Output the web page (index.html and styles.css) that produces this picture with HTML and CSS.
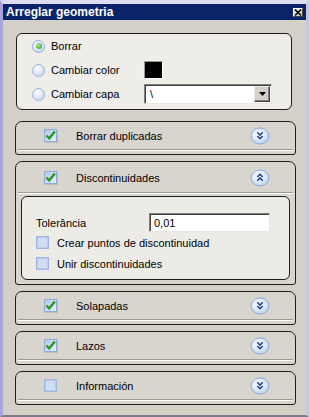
FILE: index.html
```html
<!DOCTYPE html>
<html>
<head>
<meta charset="utf-8">
<link rel="stylesheet" href="styles.css">
</head>
<body>
<div class="window">
  <div class="titlebar">
    <span class="title">Arreglar geometria</span>
    <span class="close"><svg width="8" height="7" viewBox="0 0 8 7"><path d="M1 0.5 L7 6.5 M7 0.5 L1 6.5" stroke="#000" stroke-width="1.4"/></svg></span>
  </div>
  <div class="content">
    <div class="group">
      <div class="row"><span class="radio on"></span><span class="lbl">Borrar</span></div>
      <div class="row"><span class="radio"></span><span class="lbl">Cambiar color</span><span class="swatch"></span></div>
      <div class="row"><span class="radio"></span><span class="lbl">Cambiar capa</span>
        <div class="select"><span class="sel-text">\</span><span class="arrow"><svg width="7" height="4" viewBox="0 0 7 4"><path d="M0 0 H7 L3.5 4 Z" fill="#000"/></svg></span></div>
      </div>
    </div>

    <div class="panel">
      <div class="ph">
        <span class="cb checked"><svg width="11" height="11" viewBox="0 0 11 11"><path d="M1.5 5.5 L4.2 8.5 L9.8 1.5" fill="none" stroke="#1f9c1f" stroke-width="2.4"/></svg></span>
        <span class="ptitle">Borrar duplicadas</span>
        <svg class="chev" width="20" height="18" viewBox="0 0 20 18"><defs><radialGradient id="g1" cx="0.45" cy="0.4" r="0.6"><stop offset="0" stop-color="#ffffff"/><stop offset="0.55" stop-color="#e2ebfb"/><stop offset="1" stop-color="#b7cbef"/></radialGradient></defs><ellipse cx="10" cy="9" rx="9" ry="8" fill="url(#g1)" stroke="#8faadc"/><path d="M7.3 5.3 L10 8 L12.7 5.3 M7.3 9 L10 11.7 L12.7 9" fill="none" stroke="#1f3d8c" stroke-width="1.6"/></svg>
      </div>
      <div class="sep"></div>
      <div class="pb"></div>
    </div>

    <div class="panel open">
      <div class="ph tall">
        <span class="cb checked"><svg width="11" height="11" viewBox="0 0 11 11"><path d="M1.5 5.5 L4.2 8.5 L9.8 1.5" fill="none" stroke="#1f9c1f" stroke-width="2.4"/></svg></span>
        <span class="ptitle">Discontinuidades</span>
        <svg class="chev" width="20" height="18" viewBox="0 0 20 18"><ellipse cx="10" cy="9" rx="9" ry="8" fill="url(#g1)" stroke="#8faadc"/><path d="M7.3 8 L10 5.3 L12.7 8 M7.3 11.7 L10 9 L12.7 11.7" fill="none" stroke="#1f3d8c" stroke-width="1.6"/></svg>
      </div>
      <div class="sep"></div>
      <div class="inner">
        <div class="irow"><span class="ilbl">Tolerância</span><div class="input">0,01</div></div>
        <div class="crow"><span class="cb plain"></span><span>Crear puntos de discontinuidad</span></div>
        <div class="crow"><span class="cb plain"></span><span>Unir discontinuidades</span></div>
      </div>
    </div>

    <div class="panel">
      <div class="ph">
        <span class="cb checked"><svg width="11" height="11" viewBox="0 0 11 11"><path d="M1.5 5.5 L4.2 8.5 L9.8 1.5" fill="none" stroke="#1f9c1f" stroke-width="2.4"/></svg></span>
        <span class="ptitle">Solapadas</span>
        <svg class="chev" width="20" height="18" viewBox="0 0 20 18"><ellipse cx="10" cy="9" rx="9" ry="8" fill="url(#g1)" stroke="#8faadc"/><path d="M7.3 5.3 L10 8 L12.7 5.3 M7.3 9 L10 11.7 L12.7 9" fill="none" stroke="#1f3d8c" stroke-width="1.6"/></svg>
      </div>
      <div class="sep"></div>
      <div class="pb"></div>
    </div>

    <div class="panel">
      <div class="ph">
        <span class="cb checked"><svg width="11" height="11" viewBox="0 0 11 11"><path d="M1.5 5.5 L4.2 8.5 L9.8 1.5" fill="none" stroke="#1f9c1f" stroke-width="2.4"/></svg></span>
        <span class="ptitle">Lazos</span>
        <svg class="chev" width="20" height="18" viewBox="0 0 20 18"><ellipse cx="10" cy="9" rx="9" ry="8" fill="url(#g1)" stroke="#8faadc"/><path d="M7.3 5.3 L10 8 L12.7 5.3 M7.3 9 L10 11.7 L12.7 9" fill="none" stroke="#1f3d8c" stroke-width="1.6"/></svg>
      </div>
      <div class="sep"></div>
      <div class="pb"></div>
    </div>

    <div class="panel">
      <div class="ph">
        <span class="cb plain"></span>
        <span class="ptitle">Información</span>
        <svg class="chev" width="20" height="18" viewBox="0 0 20 18"><ellipse cx="10" cy="9" rx="9" ry="8" fill="url(#g1)" stroke="#8faadc"/><path d="M7.3 5.3 L10 8 L12.7 5.3 M7.3 9 L10 11.7 L12.7 9" fill="none" stroke="#1f3d8c" stroke-width="1.6"/></svg>
      </div>
      <div class="sep"></div>
      <div class="pb"></div>
    </div>
  </div>
</div>
</body>
</html>
```
FILE: styles.css
```css
* { box-sizing: border-box; }
html, body { margin: 0; padding: 0; }
body {
  font-family: "Liberation Sans", Arial, sans-serif;
  font-size: 11px;
  color: #000;
  background: #d4d0c8;
}
.window {
  width: 309px;
  height: 417px;
  background: #d4d0c8;
  border-top: 4px solid #dedcf0;
  border-left: 3px solid #a8a4dc;
  border-right: 3px solid #c9c7dc;
  border-bottom: 2px solid #7c7a86;
  display: flex;
  flex-direction: column;
}
.titlebar {
  height: 16px;
  background: #0a246a;
  display: flex;
  align-items: center;
  padding: 0 3px 0 3px;
}
.title {
  color: #fff;
  font-weight: bold;
  font-size: 12px;
  flex: 1;
  line-height: 16px;
}
.close {
  width: 10px;
  height: 9px;
  background: #d4d0c8;
  border-top: 1px solid #fff;
  border-left: 1px solid #fff;
  border-right: 1px solid #404040;
  border-bottom: 1px solid #404040;
  display: flex;
  align-items: center;
  justify-content: center;
  margin-top: 1px;
}
.close svg { display: block; }
.content {
  padding: 13px 0 0 12px;
  display: flex;
  flex-direction: column;
  gap: 6px;
}
.group {
  margin-left: 1px;
  width: 276px;
  height: 77px;
  border: 1px solid #1e1e1e;
  border-radius: 6px;
  background: #eeede8;
  padding: 0 0 0 15px;
  margin-bottom: 5px;
}
.row {
  height: 24px;
  display: flex;
  align-items: center;
}
.radio {
  width: 13px;
  height: 13px;
  border-radius: 50%;
  border: 1px solid #98b0dc;
  background: radial-gradient(circle at 40% 35%, #ffffff 0%, #e0eafa 45%, #b3c8ee 100%);
  position: relative;
  flex: none;
}
.radio.on::after {
  content: "";
  position: absolute;
  left: 2.5px;
  top: 2.5px;
  width: 6px;
  height: 6px;
  border-radius: 50%;
  background: radial-gradient(circle at 40% 35%, #b4e79b 0%, #62b545 60%, #3f8f2c 100%);
}
.lbl {
  margin-left: 6px;
  width: 93px;
  flex: none;
}
.swatch {
  width: 19px;
  height: 18px;
  background: #000;
  border: 1px solid #fff;
  border-top-color: #9a9890;
  border-left-color: #9a9890;
  outline: 1px solid #f2f1ee;
}
.select {
  width: 128px;
  height: 20px;
  background: #fff;
  border-top: 1px solid #808080;
  border-left: 1px solid #808080;
  border-right: 1px solid #e8e6e0;
  border-bottom: 1px solid #e8e6e0;
  box-shadow: inset 1px 1px 0 #404040;
  display: flex;
  align-items: center;
}
.sel-text { flex: 1; padding-left: 5px; }
.arrow {
  width: 16px;
  height: 16px;
  margin-right: 1px;
  background: #d4d0c8;
  border-top: 1px solid #f0efeb;
  border-left: 1px solid #f0efeb;
  border-right: 1px solid #404040;
  border-bottom: 1px solid #404040;
  box-shadow: inset -1px -1px 0 #808080;
  display: flex;
  align-items: center;
  justify-content: center;
}
.arrow svg { display: block; }
.panel {
  width: 281px;
  border: 1px solid #1e1e1e;
  border-radius: 7px 7px 3px 3px;
  background: #d8d5ce;
}
.ph {
  height: 27px;
  display: flex;
  align-items: center;
  padding: 0 25px 0 28px;
}
.ph.tall { height: 30px; padding-top: 1px; }
.ptitle { margin-left: 19px; flex: 1; }
.chev { display: block; flex: none; }
.sep {
  margin: 0 2px;
  height: 2px;
  border-top: 1px solid #9c9a94;
  border-bottom: 1px solid #ffffff;
}
.pb { height: 3px; }
.cb {
  width: 13px;
  height: 13px;
  flex: none;
  display: flex;
  align-items: center;
  justify-content: center;
  border: 1px solid #92aad8;
  background: linear-gradient(135deg, #b3c7ea 0%, #d2def3 60%, #e6edf9 100%);
  box-shadow: 1px 1px 0 rgba(120,130,150,0.3);
}
.cb svg { display: block; }
.cb.plain {
  background: #cfdcf2;
  border: 1px solid #9fb5e0;
  box-shadow: inset 0 0 0 1px #b8cbec;
}
.inner {
  margin: 2px 5px 4px 5px;
  height: 84px;
  border: 1px solid #1e1e1e;
  border-radius: 6px;
  background: #ecebe6;
  padding: 15px 0 0 14px;
}
.irow {
  height: 20px;
  display: flex;
  align-items: center;
}
.ilbl { width: 113px; flex: none; padding-top: 2px; }
.input {
  width: 121px;
  height: 19px;
  background: #fff;
  border-top: 1px solid #808080;
  border-left: 1px solid #808080;
  border-right: 1px solid #e8e6e0;
  border-bottom: 1px solid #e8e6e0;
  box-shadow: inset 1px 1px 0 #404040;
  padding: 2px 0 0 4px;
  line-height: 14px;
}
.crow {
  height: 21px;
  display: flex;
  align-items: center;
}
.crow .cb { margin-right: 8px; }
```
